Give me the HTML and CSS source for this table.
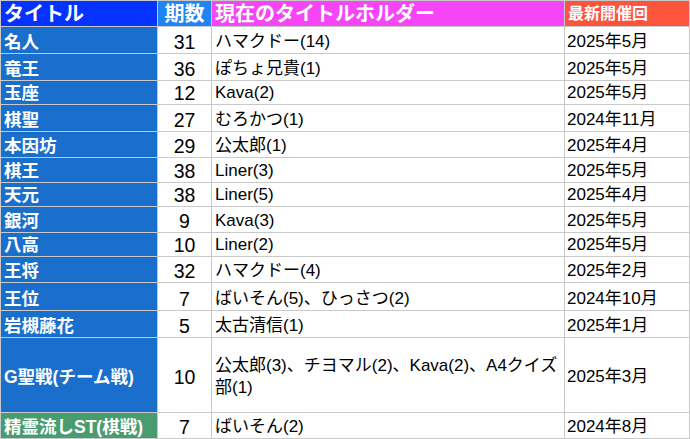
FILE: index.html
```html
<!DOCTYPE html>
<html lang="ja">
<head>
<meta charset="utf-8">
<title>タイトル一覧</title>
<link rel="stylesheet" href="styles.css">
</head>
<body>
<div class="sheet">
  <div class="c h h-title">タイトル</div>
  <div class="c h h-num">期数</div>
  <div class="c h h-holder">現在のタイトルホルダー</div>
  <div class="c h h-date">最新開催回</div>

  <div class="c t">名人</div><div class="c n">31</div><div class="c p">ハマクドー(14)</div><div class="c d">2025年5月</div>
  <div class="c t">竜王</div><div class="c n">36</div><div class="c p">ぽちょ兄貴(1)</div><div class="c d">2025年5月</div>
  <div class="c t">玉座</div><div class="c n">12</div><div class="c p">Kava(2)</div><div class="c d">2025年5月</div>
  <div class="c t">棋聖</div><div class="c n">27</div><div class="c p">むろかつ(1)</div><div class="c d">2024年11月</div>
  <div class="c t">本因坊</div><div class="c n">29</div><div class="c p">公太郎(1)</div><div class="c d">2025年4月</div>
  <div class="c t">棋王</div><div class="c n">38</div><div class="c p">Liner(3)</div><div class="c d">2025年5月</div>
  <div class="c t">天元</div><div class="c n">38</div><div class="c p">Liner(5)</div><div class="c d">2025年4月</div>
  <div class="c t">銀河</div><div class="c n">9</div><div class="c p">Kava(3)</div><div class="c d">2025年5月</div>
  <div class="c t">八高</div><div class="c n">10</div><div class="c p">Liner(2)</div><div class="c d">2025年5月</div>
  <div class="c t">王将</div><div class="c n">32</div><div class="c p">ハマクドー(4)</div><div class="c d">2025年2月</div>
  <div class="c t">王位</div><div class="c n">7</div><div class="c p">ばいそん(5)、ひっさつ(2)</div><div class="c d">2024年10月</div>
  <div class="c t">岩槻藤花</div><div class="c n">5</div><div class="c p">太古清信(1)</div><div class="c d">2025年1月</div>
  <div class="c t tall">G聖戦(チーム戦)</div><div class="c n tall">10</div><div class="c p tall">公太郎(3)、チヨマル(2)、Kava(2)、A4クイズ<br>部(1)</div><div class="c d tall">2025年3月</div>
  <div class="c t green">精霊流しST(棋戦)</div><div class="c n">7</div><div class="c p">ばいそん(2)</div><div class="c d">2024年8月</div>
</div>
</body>
</html>
```

FILE: styles.css
```css
html, body {
  margin: 0;
  padding: 0;
  background: #ffffff;
}

.sheet {
  display: grid;
  grid-template-columns: 156px 53px 352px 124px;
  grid-template-rows: 25px 26px 26px 23px 26px 25px 24px 23px 25px 23px 25px 27px 26px 74px 25px;
  gap: 1px;
  padding: 1px;
  width: 690px;
  box-sizing: border-box;
  background: #c9c9c9;
  font-family: "Liberation Sans", Arial, "Noto Sans CJK JP", sans-serif;
  color: #000000;
}

.c {
  background: #ffffff;
  display: flex;
  align-items: flex-end;
  padding: 0 2px 1px 3px;
  line-height: 20px;
  white-space: nowrap;
  overflow: hidden;
  font-size: 17px;
}

.h {
  align-items: center;
  padding-bottom: 0;
  color: #ffffff;
  font-weight: bold;
  font-size: 20px;
}

.h-title { background: #0433ff; }
.h-num { background: #1f84f5; justify-content: center; padding: 0; }
.h-holder { background: #f545f7; }
.h-date { background: #fc543d; font-size: 16px; }

.t {
  background: #1a6fcd;
  color: #ffffff;
  font-weight: bold;
  font-size: 17.5px;
}

.t.green { background: #499c6f; }

.n {
  justify-content: center;
  font-size: 19.5px;
  padding-left: 0;
  padding-right: 0;
}

.p { padding-left: 3px; }

.d { padding-left: 2px; }

.tall {
  align-items: center;
  padding-top: 3px;
  padding-bottom: 0;
}

.p.tall {
  white-space: normal;
  line-height: 22px;
}
```
